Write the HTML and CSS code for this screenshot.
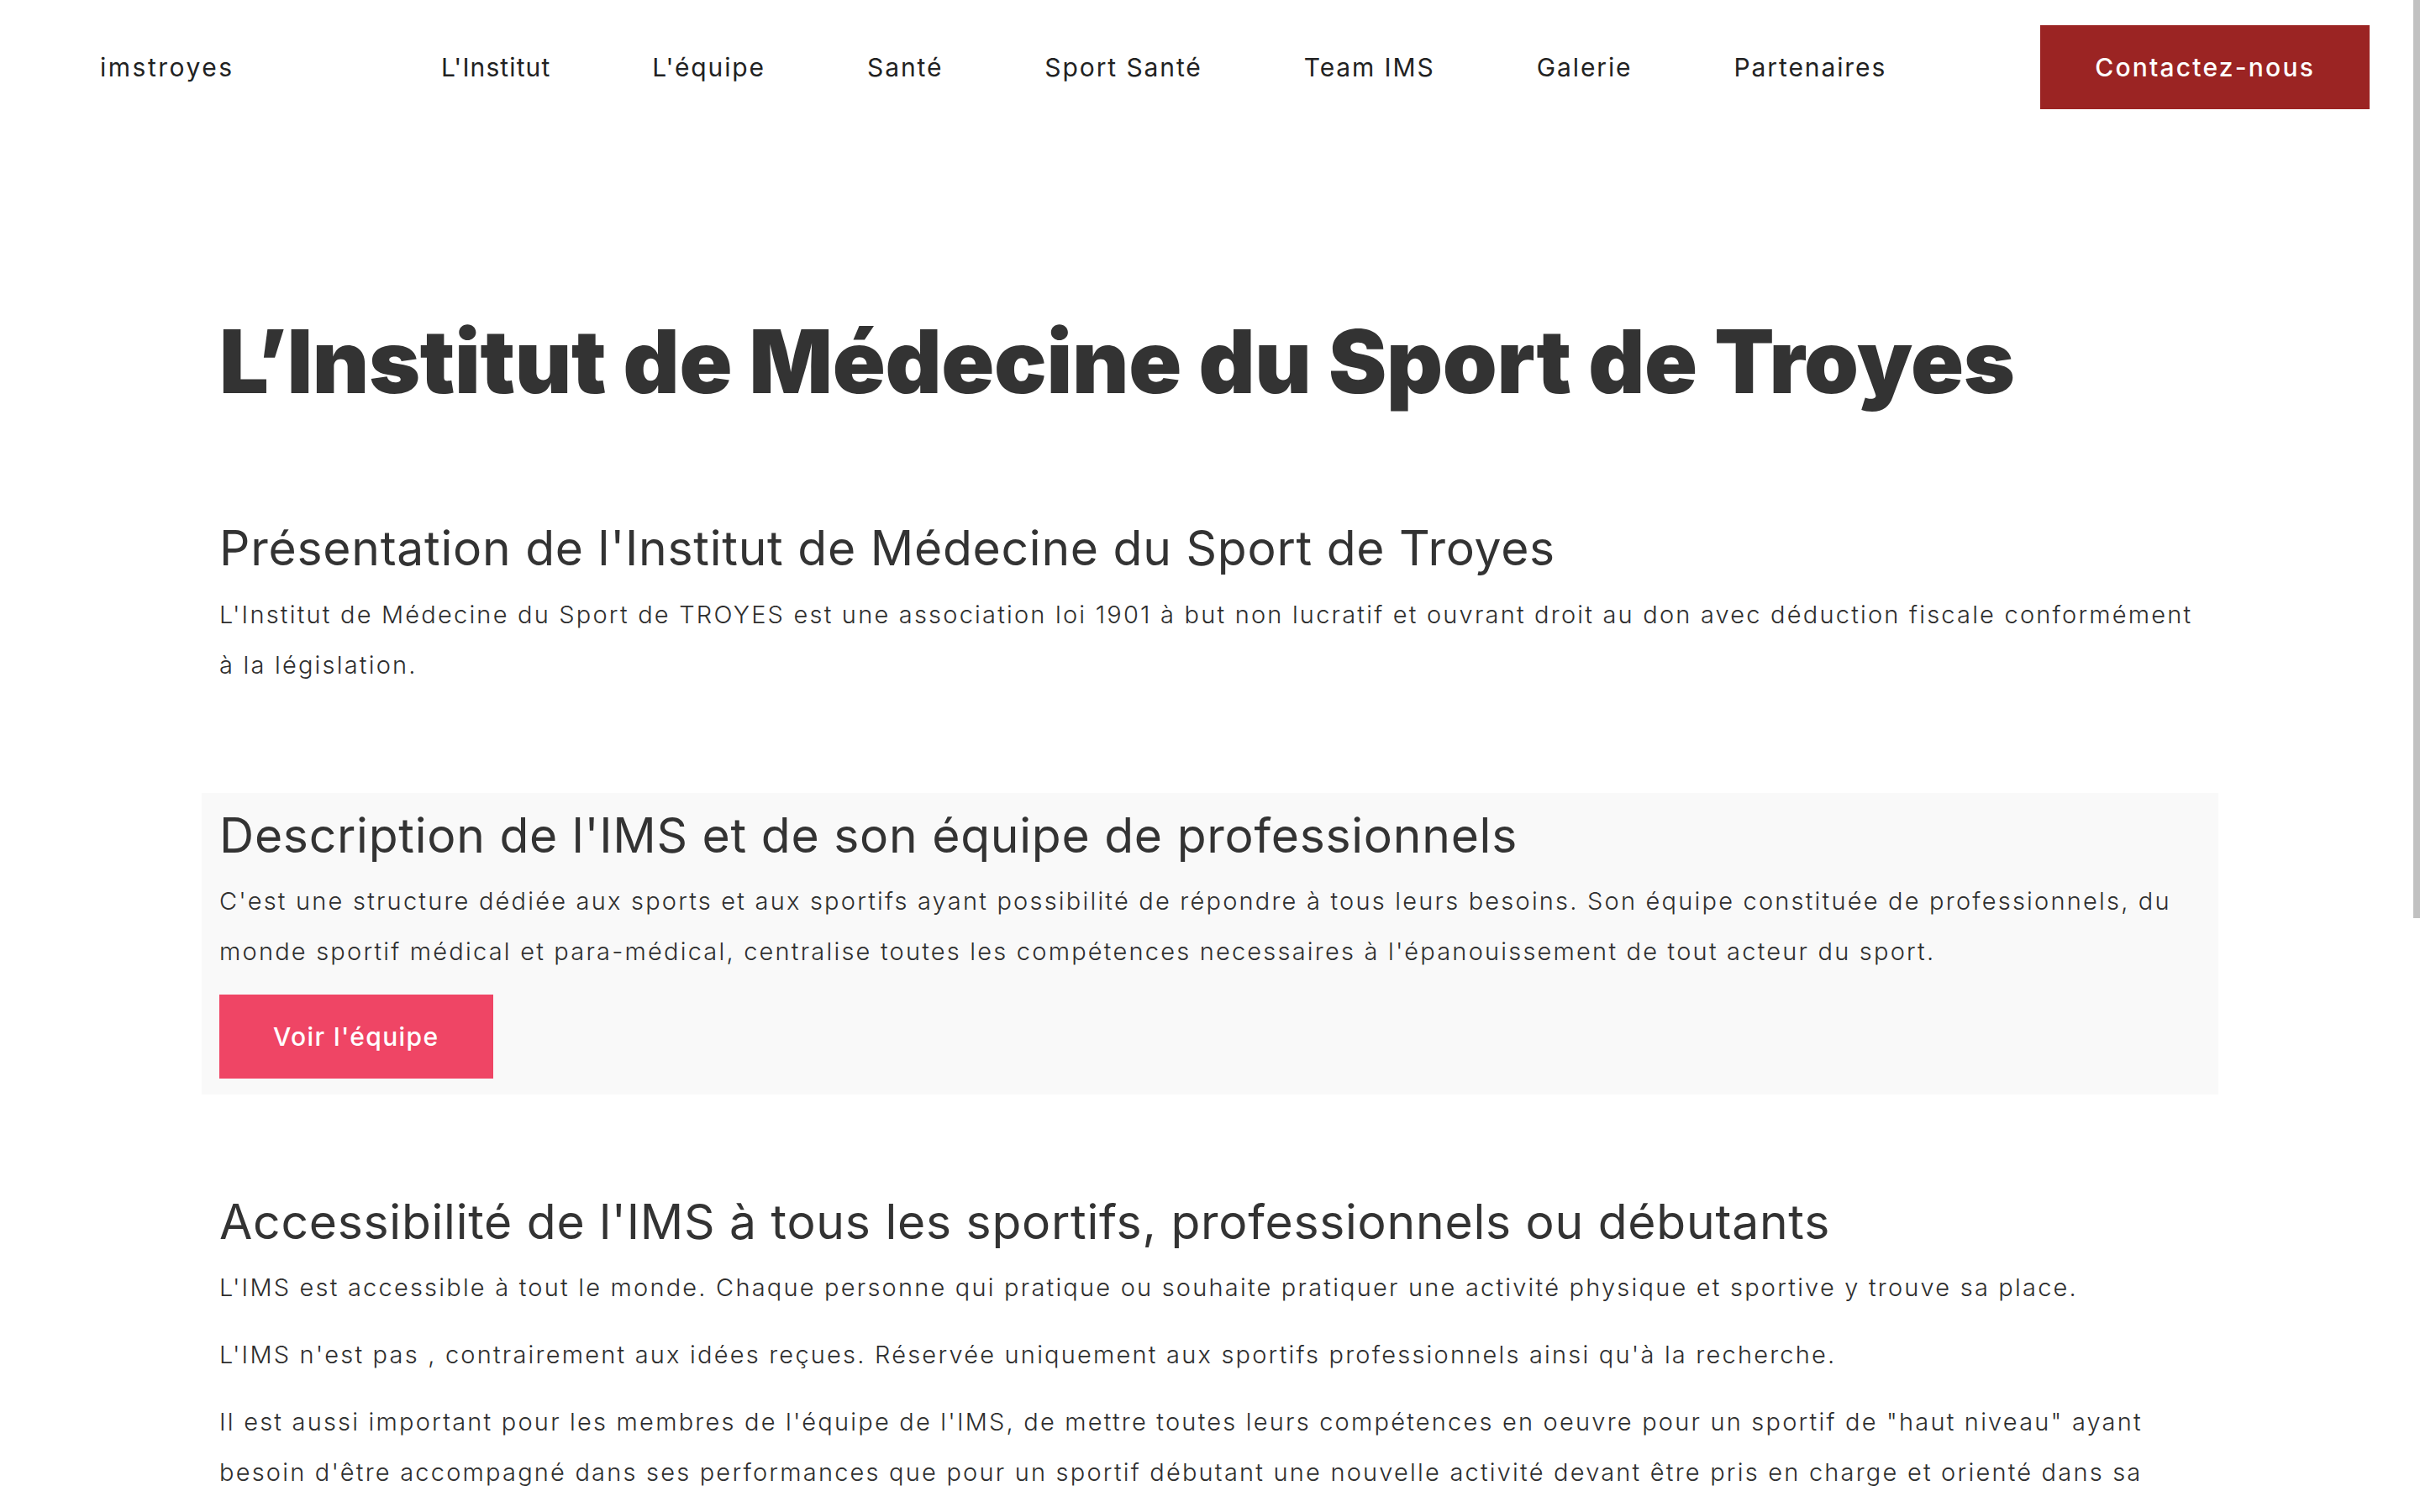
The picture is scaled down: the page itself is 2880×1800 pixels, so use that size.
FILE: index.html
```html
<!DOCTYPE html>
<html lang="fr">
<head>
<meta charset="utf-8">
<title>imstroyes</title>
<link rel="stylesheet" href="styles.css">
</head>
<body>
<header class="header">
  <a class="brand" href="#">imstroyes</a>
  <nav class="menu">
    <a class="narrow" href="#">L'Institut</a>
    <a href="#">L'équipe</a>
    <a href="#">Santé</a>
    <a href="#">Sport Santé</a>
    <a href="#">Team IMS</a>
    <a href="#">Galerie</a>
    <a href="#">Partenaires</a>
  </nav>
  <a class="cta" href="#">Contactez-nous</a>
</header>
<main class="container">
  <h1 class="title">L’Institut de Médecine du Sport de Troyes</h1>

  <section class="block first">
    <h2>Présentation de l'Institut de Médecine du Sport de Troyes</h2>
    <p>L'Institut de Médecine du Sport de TROYES est une association loi 1901 à but non lucratif et ouvrant droit au don avec déduction fiscale conformément à la législation.</p>
  </section>

  <section class="block boxed">
    <h2>Description de l'IMS et de son équipe de professionnels</h2>
    <p>C'est une structure dédiée aux sports et aux sportifs ayant possibilité de répondre à tous leurs besoins. Son équipe constituée de professionnels, du monde sportif médical et para-médical, centralise toutes les compétences necessaires à l'épanouissement de tout acteur du sport.</p>
    <a class="btn" href="#">Voir l'équipe</a>
  </section>

  <section class="block last">
    <h2>Accessibilité de l'IMS à tous les sportifs, professionnels ou débutants</h2>
    <p>L'IMS est accessible à tout le monde. Chaque personne qui pratique ou souhaite pratiquer une activité physique et sportive y trouve sa place.</p>
    <p>L'IMS n'est pas , contrairement aux idées reçues. Réservée uniquement aux sportifs professionnels ainsi qu'à la recherche.</p>
    <p>Il est aussi important pour les membres de l'équipe de l'IMS, de mettre toutes leurs compétences en oeuvre pour un sportif de "haut niveau" ayant besoin d'être accompagné dans ses performances que pour un sportif débutant une nouvelle activité devant être pris en charge et orienté dans sa pratique sportive.</p>
  </section>
</main>
<div class="scroll-thumb"></div>
</body>
</html>
```
FILE: styles.css
```css
html {
  overflow: hidden;
}
body {
  margin: 0;
  background: #ffffff;
  color: #333333;
  font-family: Inter, "Open Sans", "Liberation Sans", sans-serif;
}
a {
  color: inherit;
  text-decoration: none;
}

.header {
  display: flex;
  align-items: center;
  height: 160px;
  padding: 0 60px 0 119px;
  box-sizing: border-box;
  font-size: 30px;
  letter-spacing: 1.9px;
}
.brand {
  width: 406px;
  color: #222222;
  letter-spacing: 2.5px;
}
.menu {
  display: flex;
  gap: 121px;
}
.menu a {
  color: #222222;
}
.menu .narrow {
  letter-spacing: 1.1px;
}
.cta {
  margin-left: auto;
  display: flex;
  align-items: center;
  height: 100px;
  padding: 0 65px;
  background: #9b2423;
  color: #ffffff;
  font-weight: 500;
  letter-spacing: 2.2px;
}

.container {
  width: 2400px;
  margin: 0 auto;
}
.title {
  margin: 208px 21px 0;
  font-size: 104px;
  line-height: 125px;
  font-weight: 900;
  letter-spacing: -0.3px;
  color: #333333;
}
.block {
  padding: 0 5px 0 21px;
}
.block h2 {
  margin: 0 0 16px;
  font-size: 57px;
  line-height: 67px;
  font-weight: 400;
  letter-spacing: 0.75px;
  color: #333333;
}
.block p {
  margin: 0;
  font-size: 29px;
  line-height: 60px;
  font-weight: 300;
  letter-spacing: 2.2px;
  color: #2e2e2e;
}
.first {
  margin-top: 126px;
}
.boxed {
  margin-top: 122px;
  padding: 17px 5px 19px 21px;
  background: #f9f9f9;
}
.boxed h2 {
  margin-bottom: 15px;
}
.btn {
  display: inline-flex;
  align-items: center;
  height: 100px;
  margin-top: 21px;
  padding: 0 64px;
  background: #ef4565;
  color: #ffffff;
  font-size: 30px;
  font-weight: 500;
  letter-spacing: 1.4px;
}
.last {
  margin-top: 118px;
}
.last h2 {
  margin-bottom: 15px;
}
.last p {
  margin-bottom: 20px;
}

.scroll-thumb {
  position: fixed;
  top: 0;
  right: 0;
  width: 8px;
  height: 1093px;
  background: #c1c1c1;
}
```
